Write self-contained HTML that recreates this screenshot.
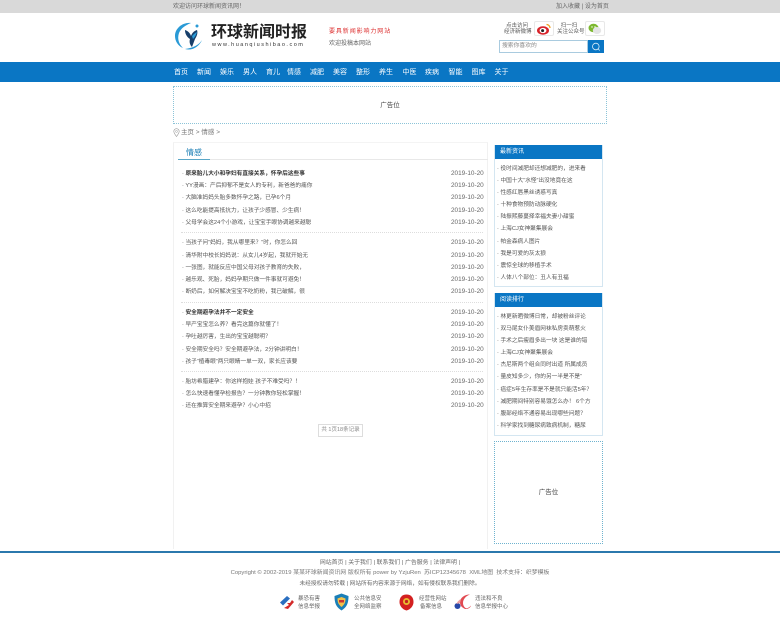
<!DOCTYPE html>
<html lang="zh"><head><meta charset="utf-8"><title>环球新闻时报</title>
<style>
*{margin:0;padding:0;box-sizing:border-box}
html,body{width:780px;height:631px;overflow:hidden;background:#fff}
body{position:relative;font-family:"Liberation Sans","Noto Sans CJK SC",sans-serif;font-size:6px;color:#666}
.a{position:absolute;white-space:nowrap}
.c{transform:translateX(-50%)}
.nav span{position:absolute;top:67.5px;font-size:7px;line-height:10px;color:#fff;white-space:nowrap}
.li{position:absolute;left:182px;font-size:5.7px;line-height:8px;color:#555;white-space:nowrap}
.li b{color:#333}
.dt{position:absolute;left:451px;font-size:6.4px;line-height:8px;color:#666}
.s{position:absolute;left:497px;font-size:5.7px;line-height:8px;color:#555;white-space:nowrap}
.hr{position:absolute;left:181px;width:302px;border-top:1px dotted #ddd}
.box{position:absolute;border:1px solid #d4e6f1}
.hd{position:absolute;background:#0a76c4;color:#fff;font-size:6px;line-height:15px;padding-left:5px;left:495px;width:107px;height:14px}
</style></head><body>
<div class="a" style="left:0;top:0;width:780px;height:13px;background:#d9d9d9"></div>
<div class="a" style="left:173px;top:3px;line-height:8px;color:#666">欢迎访问环球新闻资讯网！</div>
<div class="a" style="left:556px;top:3px;line-height:8px;color:#666">加入收藏 | 设为首页</div>

<svg class="a" style="left:174px;top:21px" width="30" height="30" viewBox="0 0 30 30">
<path d="M17 2C9 1 1 7 1 15c0 5 3 10 8 12C5 23 3 18 5 12 7 7 12 4 17 2Z" fill="#2a9ad6"/>
<path d="M11 28c7 2 14-2 17-9-3 5-9 8-17 9Z" fill="#2a9ad6"/>
<path d="M11 9c3 1 5 3 6 6 1-3 3-5 6-6 1 3 0 6-2 9l-3 8c-2-2-3-5-2-8-3-2-5-5-5-9Z" fill="#173f6a"/>
<path d="M18 15c2-2 3-3 5-4-1 3-2 5-4 7Z" fill="#2a9ad6"/>
<circle cx="23" cy="5" r="1.500" fill="#2a9ad6"/>
</svg>
<div class="a" style="left:211px;top:23px;font-size:16px;line-height:20px;font-weight:700;color:#222">环球新闻时报</div>
<div class="a" style="left:212px;top:42px;font-size:5.500px;line-height:6px;letter-spacing:1.500px;color:#333">www.huanqiushibao.com</div>
<div class="a" style="left:329px;top:28px;font-size:6px;line-height:8px;letter-spacing:.9px;color:#d33">要具新闻影响力网站</div>
<div class="a" style="left:329px;top:39.500px;line-height:8px;color:#666">欢迎投稿本网站</div>

<div class="a" style="left:504px;top:22.500px;width:26px;text-align:center;font-size:5.500px;line-height:6.500px;color:#555">点击访问<br>经济新微博</div>
<div class="a" style="left:534px;top:21px;width:20px;height:15px;border:1px solid #e8e8e8;border-radius:2px"></div>
<svg class="a" style="left:536px;top:23px" width="16" height="12" viewBox="0 0 16 12"><ellipse cx="7" cy="7.500" rx="6" ry="4.200" fill="#d8232a"/><ellipse cx="7" cy="7.500" rx="3.400" ry="2.600" fill="#fff"/><circle cx="6.600" cy="7.600" r="1.500" fill="#222"/><path d="M10.500 1.500a3.500 3.500 0 0 1 3.500 3.500" fill="none" stroke="#f0a020" stroke-width="1.300"/></svg>
<div class="a" style="left:557px;top:22.500px;width:24px;text-align:center;font-size:5.500px;line-height:6.500px;color:#555">扫一扫<br>关注公众号</div>
<div class="a" style="left:585px;top:21px;width:20px;height:15px;border:1px solid #e8e8e8;border-radius:2px"></div>
<svg class="a" style="left:588px;top:23px" width="14" height="12" viewBox="0 0 14 12"><ellipse cx="5.500" cy="5" rx="5" ry="4.200" fill="#7cb82f"/><ellipse cx="9" cy="7.500" rx="4.200" ry="3.500" fill="#e4e4e4"/><circle cx="4" cy="4" r=".7" fill="#fff"/><circle cx="7" cy="4" r=".7" fill="#fff"/></svg>
<div class="a" style="left:499px;top:40px;width:89px;height:13px;border:1px solid #a9cbdf;background:#fff;padding-left:2px;line-height:11px;font-size:5.800px;color:#888">搜索你喜欢的</div>
<div class="a" style="left:588px;top:40px;width:16px;height:13px;background:#0a76c4"></div>
<svg class="a" style="left:591px;top:42px" width="10" height="10" viewBox="0 0 10 10"><circle cx="4.800" cy="4.500" r="3.300" fill="none" stroke="#d8ecf8" stroke-width=".8"/><path d="M7.200 7l1.500 1.500" stroke="#d8ecf8" stroke-width=".8"/></svg>

<div class="a" style="left:0;top:61.500px;width:780px;height:20.500px;background:#0a76c4"></div>
<div class="nav">
<span style="left:174px">首页</span><span style="left:197px">新闻</span><span style="left:220px">娱乐</span><span style="left:243px">男人</span><span style="left:266px">育儿</span><span style="left:287px">情感</span><span style="left:310px">减肥</span><span style="left:333px">美容</span><span style="left:356px">整形</span><span style="left:379px">养生</span><span style="left:402.500px">中医</span><span style="left:425px">疾病</span><span style="left:448.500px">智能</span><span style="left:471.500px">图库</span><span style="left:494.500px">关于</span>
</div>

<div class="a" style="left:173px;top:86px;width:434px;height:38px;border:1px dotted #8cc4d8"></div>
<div class="a c" style="left:390px;top:101px;font-size:6.500px;line-height:9px;color:#444">广告位</div>

<svg class="a" style="left:173px;top:128px" width="7" height="9" viewBox="0 0 7 9"><path d="M3.500 8.500C2 6.500.8 5 .8 3.400a2.700 2.700 0 0 1 5.400 0C6.200 5 5 6.500 3.500 8.500Z" fill="none" stroke="#999" stroke-width=".6"/><circle cx="3.500" cy="3.400" r="1" fill="none" stroke="#999" stroke-width=".5"/></svg>
<div class="a" style="left:181px;top:128px;font-size:6.500px;line-height:9px;color:#777">主页 &gt; 情感 &gt;</div>

<div class="a" style="left:173px;top:142px;width:315px;height:407px;border-left:1px solid #f1f1f1;border-right:1px solid #f1f1f1;border-top:1px solid #f4f4f4"></div>
<div class="a" style="left:186px;top:147px;font-size:8px;line-height:11px;color:#1c7fb5">情感</div>
<div class="a" style="left:178px;top:159px;width:310px;height:1px;background:#e8e8e8"></div>
<div class="a" style="left:178px;top:158.500px;width:32px;height:1.500px;background:#5aa7c7"></div>

<div class="li" style="top:169.500px">· <b>原来胎儿大小和孕妇有直接关系，怀孕后这些事</b></div><div class="dt" style="top:169.500px">2019-10-20</div>
<div class="li" style="top:182px">· YY漫画：产后抑郁不是女人的专利，新爸爸的痛你</div><div class="dt" style="top:182px">2019-10-20</div>
<div class="li" style="top:194px">· 大脑准妈妈头胎多数怀孕之路，已孕6个月</div><div class="dt" style="top:194px">2019-10-20</div>
<div class="li" style="top:206.500px">· 这么吃能提高抵抗力，让孩子少感冒、少生病！</div><div class="dt" style="top:206.500px">2019-10-20</div>
<div class="li" style="top:218.500px">· 父母学会这24个小游戏，让宝宝手眼协调越来越聪</div><div class="dt" style="top:218.500px">2019-10-20</div>
<div class="hr" style="top:232px"></div>
<div class="li" style="top:239px">· 当孩子问“妈妈，我从哪里来？”时，你怎么回</div><div class="dt" style="top:239px">2019-10-20</div>
<div class="li" style="top:251.500px">· 清华附中校长妈妈说：从女儿4岁起，我就开始无</div><div class="dt" style="top:251.500px">2019-10-20</div>
<div class="li" style="top:263.500px">· 一张图，就能反应中国父母对孩子教育的失败，</div><div class="dt" style="top:263.500px">2019-10-20</div>
<div class="li" style="top:275.500px">· 越乐观、死胎，妈妈孕期只做一件事就可避免！</div><div class="dt" style="top:275.500px">2019-10-20</div>
<div class="li" style="top:288px">· 断奶后，如何解决宝宝不吃奶粉，我已破解，很</div><div class="dt" style="top:288px">2019-10-20</div>
<div class="hr" style="top:301.500px"></div>
<div class="li" style="top:308.500px">· <b>安全期避孕法并不一定安全</b></div><div class="dt" style="top:308.500px">2019-10-20</div>
<div class="li" style="top:321px">· 早产宝宝怎么养？看完这篇你就懂了！</div><div class="dt" style="top:321px">2019-10-20</div>
<div class="li" style="top:333px">· 孕吐越厉害，生出的宝宝越聪明？</div><div class="dt" style="top:333px">2019-10-20</div>
<div class="li" style="top:345.500px">· 安全期安全吗？安全期避孕法，2分钟讲明白！</div><div class="dt" style="top:345.500px">2019-10-20</div>
<div class="li" style="top:357.500px">· 孩子“植毒眼”两只眼睛一单一双，家长应该要</div><div class="dt" style="top:357.500px">2019-10-20</div>
<div class="hr" style="top:371px"></div>
<div class="li" style="top:378px">· 胎坊希腊建孕：你这样抱娃 孩子不难受吗？！</div><div class="dt" style="top:378px">2019-10-20</div>
<div class="li" style="top:390px">· 怎么快速看懂孕检报告？一分钟教你轻松掌握！</div><div class="dt" style="top:390px">2019-10-20</div>
<div class="li" style="top:402px">· 还在推算安全期来避孕？小心中招</div><div class="dt" style="top:402px">2019-10-20</div>

<div class="a" style="left:318px;top:424px;width:45px;height:13px;border:1px solid #ddd;text-align:center;line-height:11px;font-size:5.500px;color:#888">共 1页18条记录</div>

<div class="box" style="left:494px;top:145px;width:109px;height:142px"></div>
<div class="hd" style="top:145px">最新资讯</div>
<div class="s" style="top:164.500px">· 役时间减肥却还想减肥的，进来看</div>
<div class="s" style="top:176.500px">· 中国十大“水怪”出没地竟在这</div>
<div class="s" style="top:188.500px">· 性感红唇黑丝诱惑写真</div>
<div class="s" style="top:201px">· 十种食物预防动脉硬化</div>
<div class="s" style="top:213px">· 陆振熙藤蔓择幸福夫妻小甜蜜</div>
<div class="s" style="top:225px">· 上海CJ女神聚集展会</div>
<div class="s" style="top:237.500px">· 帕金森病人图片</div>
<div class="s" style="top:249.500px">· 我是可爱的灰太狼</div>
<div class="s" style="top:261.500px">· 震惊全球的移植手术</div>
<div class="s" style="top:274px">· 人体八个部位：丑人有丑福</div>

<div class="box" style="left:494px;top:293px;width:109px;height:143px"></div>
<div class="hd" style="top:293px">阅读排行</div>
<div class="s" style="top:312.500px">· 林更新晒微博日常，却被粉丝评论</div>
<div class="s" style="top:324.500px">· 双马尾女仆美眉网袜私房卖萌惹火</div>
<div class="s" style="top:336.500px">· 手术之后瘦眉多出一块 这是谁的错</div>
<div class="s" style="top:349px">· 上海CJ女神聚集展会</div>
<div class="s" style="top:361px">· 杰尼斯两个组合同时出道 所属成员</div>
<div class="s" style="top:373px">· 量皮知多少，你的另一半是不是“</div>
<div class="s" style="top:385.500px">· 癌症5年生存率是不是就只能活5年？</div>
<div class="s" style="top:397.500px">· 减肥期间特别容易饿怎么办！ 6个方</div>
<div class="s" style="top:409.500px">· 腹部经络不通容易出现哪些问题？</div>
<div class="s" style="top:422px">· 科学家找到糖尿病致病机制，糖尿</div>

<div class="a" style="left:494px;top:441px;width:109px;height:103px;border:1px dotted #6fb3cf"></div>
<div class="a c" style="left:548.500px;top:488px;font-size:6.500px;line-height:9px;color:#444">广告位</div>

<div class="a" style="left:0;top:551px;width:780px;height:1.500px;background:#2b78ad"></div>
<div class="a c" style="left:390px;top:558.500px;font-size:5.900px;line-height:8px;color:#666">网站首页 | 关于我们 | 联系我们 | 广告服务 | 法律声明 |</div>
<div class="a c" style="left:390px;top:568.500px;font-size:5.900px;line-height:9px;color:#777">Copyright © 2002-2019 某某环球新闻资讯网 版权所有 power by YzjuRen&nbsp; 苏ICP12345678&nbsp; XML地图&nbsp; 技术支持：织梦模板</div>
<div class="a c" style="left:390px;top:579.500px;font-size:5.700px;line-height:8px;color:#666">未经授权请勿转载 | 网站所有内容来源于网络，如有侵权联系我们删除。</div>

<svg class="a" style="left:280px;top:596px" width="14" height="13" viewBox="0 0 14 13"><path d="M7 0L0 6.500l3 3 5-5 2-2Z" fill="#2a6fc0"/><path d="M14 6L8 13l-4-1 5-3-2-2h3l2-3Z" fill="#d32a2a"/></svg>
<div class="a" style="left:298px;top:595px;font-size:5.500px;line-height:8px;color:#666">暴恐有害<br>信息举报</div>
<svg class="a" style="left:334px;top:593px" width="15" height="18" viewBox="0 0 15 18"><path d="M7.500.500L14.500 3c0 7-1.500 11-7 14.500C2 14 .500 10 .500 3Z" fill="#1a7fb8"/><path d="M7.500 4L11.500 5.500c0 4-1 6-4 8.500-3-2.500-4-4.500-4-8.500Z" fill="#f2c14a"/><rect x="5" y="7" width="5" height="2.500" fill="#c33"/></svg>
<div class="a" style="left:354px;top:595px;font-size:5.500px;line-height:8px;color:#666">公共信息安<br>全网络监察</div>
<svg class="a" style="left:399px;top:594px" width="15" height="17" viewBox="0 0 15 17"><path d="M7.500.500C12 .500 14.500 3.500 14.500 8c0 4-3 7.500-7 8.500-4-1-7-4.500-7-8.500C.500 3.500 3 .500 7.500.500Z" fill="#d32020"/><circle cx="7.500" cy="7.500" r="3.500" fill="#e8b830"/><circle cx="7.500" cy="7.500" r="1.600" fill="#c31d1d"/></svg>
<div class="a" style="left:419px;top:595px;width:24px;text-align:center;font-size:5.500px;line-height:8px;color:#666">经营性网站<br>备案信息</div>
<svg class="a" style="left:454px;top:594px" width="18" height="16" viewBox="0 0 18 16"><path d="M16 .500C10 .500 6 4 6 8.500c0 4 3.500 6.500 7.500 6.500-3-1-4.500-3.500-4.500-6 0-4 3-7 7-8.500Z" fill="#e14a52"/><path d="M17 11.500c-2 2.500-5 3.500-8 3 3 1 7 .500 8-3Z" fill="#e14a52"/><circle cx="3.500" cy="12" r="3" fill="#2748a8"/><path d="M7 5c-2 1-4 3-4.500 5L6 9Z" fill="#f0a0a0"/></svg>
<div class="a" style="left:475px;top:595px;font-size:5.500px;line-height:8px;color:#666">违法和不良<br>信息举报中心</div>
</body></html>
